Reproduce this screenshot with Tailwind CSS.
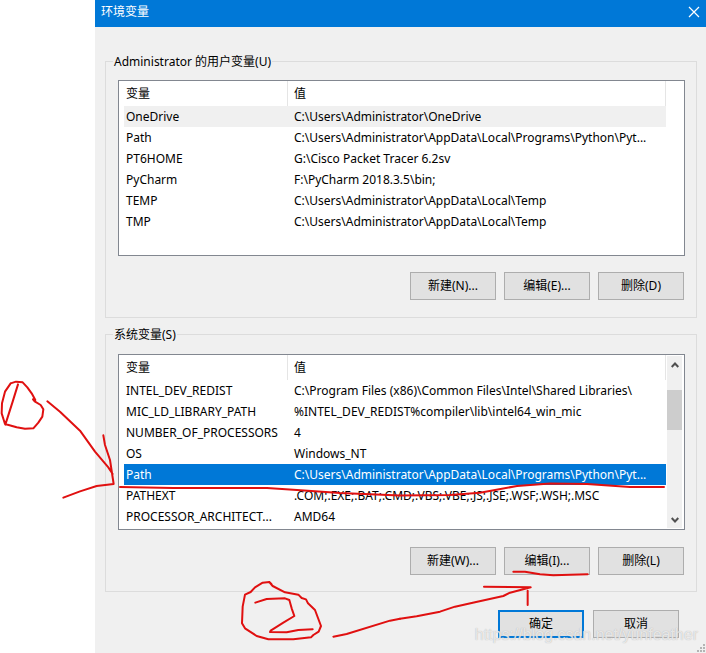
<!DOCTYPE html>
<html lang="zh-CN">
<head>
<meta charset="utf-8">
<title>环境变量</title>
<script src="https://cdn.jsdelivr.net/npm/@tailwindcss/browser@4"></script>
</head>
<body class="bg-white font-['Noto_Sans','Noto_Sans_CJK_SC',sans-serif] text-[12px] leading-4 text-black">
<div class="relative flex min-h-screen pl-[95px]">
  <main class="relative flex min-w-0 flex-1 flex-col bg-[#f0f0f0]">
    <header class="flex h-[27px] items-center justify-between bg-[#0078d7] pr-1.5 pl-1.5 text-white">
      <h1 class="pb-1">环境变量</h1>
      <button type="button" aria-label="关闭" class="pb-1">
        <svg class="size-3" viewBox="0 0 12 12" fill="none" stroke="currentColor" stroke-width="1.2"><path d="M1 1l10 10M11 1L1 11"/></svg>
      </button>
    </header>

    <div class="flex flex-col gap-2 pt-[26px] pr-[9px] pl-2.5">
      <fieldset class="min-w-0 border border-[#dcdcdc] pt-2.5 pr-[11px] pb-[17px] pl-3">
        <legend class="-ml-[5px] px-px leading-[17px]">Administrator 的用户变量(U)</legend>
        <div class="flex border border-[#828790] bg-white pb-[23px] pl-[5px]">
          <table class="min-w-0 flex-1 table-fixed border-collapse whitespace-nowrap text-left">
            <thead class="block">
              <tr class="flex h-[25px] items-center">
                <th class="h-full w-[164px] border-r border-[#e5e5e5] pt-[5px] pl-0.5 font-normal">变量</th>
                <th class="h-full flex-1 border-r border-[#e5e5e5] pt-[5px] pl-1.5 font-normal">值</th>
              </tr>
            </thead>
            <tbody class="block">
              <tr class="flex h-[21px] items-center bg-[#f0f0f0]"><td class="w-[164px] pl-0.5">OneDrive</td><td class="pl-1.5">C:\Users\Administrator\OneDrive</td></tr>
              <tr class="flex h-[21px] items-center"><td class="w-[164px] pl-0.5">Path</td><td class="pl-1.5">C:\Users\Administrator\AppData\Local\Programs\Python\Pyt...</td></tr>
              <tr class="flex h-[21px] items-center"><td class="w-[164px] pl-0.5">PT6HOME</td><td class="pl-1.5">G:\Cisco Packet Tracer 6.2sv</td></tr>
              <tr class="flex h-[21px] items-center"><td class="w-[164px] pl-0.5">PyCharm</td><td class="pl-1.5">F:\PyCharm 2018.3.5\bin;</td></tr>
              <tr class="flex h-[21px] items-center"><td class="w-[164px] pl-0.5">TEMP</td><td class="pl-1.5">C:\Users\Administrator\AppData\Local\Temp</td></tr>
              <tr class="flex h-[21px] items-center"><td class="w-[164px] pl-0.5">TMP</td><td class="pl-1.5">C:\Users\Administrator\AppData\Local\Temp</td></tr>
            </tbody>
          </table>
          <div class="w-[18px]"></div>
        </div>
        <div class="mt-4 flex justify-end gap-2 pr-px">
          <button type="button" class="h-7 w-[86px] border border-[#adadad] bg-[#e1e1e1]">新建(N)...</button>
          <button type="button" class="h-7 w-[86px] border border-[#adadad] bg-[#e1e1e1]">编辑(E)...</button>
          <button type="button" class="h-7 w-[86px] border border-[#adadad] bg-[#e1e1e1]">删除(D)</button>
        </div>
      </fieldset>

      <fieldset class="min-w-0 border border-[#dcdcdc] pt-[11px] pr-[11px] pb-4 pl-3">
        <legend class="-ml-[5px] px-px leading-[17px]">系统变量(S)</legend>
        <div class="flex border border-[#828790] bg-white pl-[5px]">
          <table class="mb-0.5 min-w-0 flex-1 table-fixed border-collapse whitespace-nowrap text-left">
            <thead class="block">
              <tr class="flex h-[25px] items-center">
                <th class="h-full w-[164px] border-r border-[#e5e5e5] pt-[5px] pl-0.5 font-normal">变量</th>
                <th class="h-full flex-1 border-r border-[#e5e5e5] pt-[5px] pl-1.5 font-normal">值</th>
              </tr>
            </thead>
            <tbody class="block">
              <tr class="flex h-[21px] items-center"><td class="w-[164px] pl-0.5">INTEL_DEV_REDIST</td><td class="pl-1.5">C:\Program Files (x86)\Common Files\Intel\Shared Libraries\</td></tr>
              <tr class="flex h-[21px] items-center"><td class="w-[164px] pl-0.5">MIC_LD_LIBRARY_PATH</td><td class="pl-1.5">%INTEL_DEV_REDIST%compiler\lib\intel64_win_mic</td></tr>
              <tr class="flex h-[21px] items-center"><td class="w-[164px] pl-0.5">NUMBER_OF_PROCESSORS</td><td class="pl-1.5">4</td></tr>
              <tr class="flex h-[21px] items-center"><td class="w-[164px] pl-0.5">OS</td><td class="pl-1.5">Windows_NT</td></tr>
              <tr class="flex h-[21px] items-center bg-[#0078d7] text-white"><td class="w-[164px] pl-0.5">Path</td><td class="pl-1.5">C:\Users\Administrator\AppData\Local\Programs\Python\Pyt...</td></tr>
              <tr class="flex h-[21px] items-center"><td class="w-[164px] pl-0.5">PATHEXT</td><td class="pl-1.5">.COM;.EXE;.BAT;.CMD;.VBS;.VBE;.JS;.JSE;.WSF;.WSH;.MSC</td></tr>
              <tr class="flex h-[21px] items-center"><td class="w-[164px] pl-0.5">PROCESSOR_ARCHITECT...</td><td class="pl-1.5">AMD64</td></tr>
            </tbody>
          </table>
          <div class="my-px mr-0.5 ml-px flex w-[15px] flex-col items-center bg-[#f0f0f0]">
            <button type="button" aria-label="向上滚动" class="flex h-[17px] w-full items-center justify-center">
              <svg class="size-2" viewBox="0 0 8 8" fill="none" stroke="#505050" stroke-width="2"><path d="M.7 6L4 2.5 7.3 6"/></svg>
            </button>
            <div class="mt-[17px] h-10 w-full bg-[#cdcdcd]"></div>
            <button type="button" aria-label="向下滚动" class="mt-auto flex h-[17px] w-full items-center justify-center">
              <svg class="size-2" viewBox="0 0 8 8" fill="none" stroke="#505050" stroke-width="2"><path d="M.7 2L4 5.5 7.3 2"/></svg>
            </button>
          </div>
        </div>
        <div class="mt-[17px] flex justify-end gap-2 pr-px">
          <button type="button" class="h-7 w-[86px] border border-[#adadad] bg-[#e1e1e1]">新建(W)...</button>
          <button type="button" class="h-7 w-[86px] border border-[#adadad] bg-[#e1e1e1]">编辑(I)...</button>
          <button type="button" class="h-7 w-[86px] border border-[#adadad] bg-[#e1e1e1]">删除(L)</button>
        </div>
      </fieldset>
    </div>

    <footer class="mt-[18px] flex justify-end gap-[9px] pr-[27px]">
      <button type="button" class="h-7 w-[86px] border-2 border-[#0078d7] bg-[#e1e1e1]">确定</button>
      <button type="button" class="h-7 w-[86px] border border-[#adadad] bg-[#e1e1e1]">取消</button>
    </footer>

    <!-- Resize grip -->
    <svg class="absolute right-0 bottom-0 size-[9px]" viewBox="0 0 9 9" fill="#b4b4b4"><path d="M6 0h2v2H6zM3 3h2v2H3zM6 3h2v2H6zM0 6h2v2H0zM3 6h2v2H3zM6 6h2v2H6z"/></svg>
    <p class="pointer-events-none absolute right-2 bottom-2 font-['Liberation_Sans',sans-serif] text-[16px] leading-5 text-white/70 [text-shadow:0_0_1px_#a8a8a8]">https://blog.csdn.net/yunfeather</p>
  </main>

  <!-- Hand-drawn annotations -->
  <svg class="pointer-events-none absolute top-0 left-0 h-[653px] w-[706px]" viewBox="0 0 706 653" fill="none" stroke="#e01010" stroke-width="2" stroke-linecap="round" stroke-linejoin="round" aria-hidden="true">
    <g transform="translate(0 370) scale(.33333)" stroke-width="6">
      <path d="M32 40L48 35L68 37L82 52L95 70L106 90L99 88L104 94L122 105L130 118L127 140L115 158L100 175L75 176L50 172L15 162L5 130L6 100L15 65L32 40M54 43L38 95L16 164"/>
      <path d="M142 94L180 125L240 182L285 245L325 292L338 312M310 196L315 225L330 270L341 342L290 348L240 364L190 383"/>
    </g>
    <path d="M120 487L173 488L267 488L297 490L340 493L400 495.5L450 495L480 492.7L517 486L550 483.5L587 484L630 487L664 487"/>
    <g transform="translate(230 560) scale(.33333)" stroke-width="6">
      <path d="M118 66L128 78L165 97L205 104L215 114L228 118L234 130L255 150L273 198L266 215L250 225L243 232L190 238L115 238L80 228L45 205L36 190L38 140L45 104L62 96L75 82L98 68L118 66L124 72"/>
      <path d="M76 128L110 117L165 115L178 120L185 145L193 168L160 188L122 212L120 216L170 217L205 210L248 208"/>
      <path d="M310 230L350 222L480 182L510 176"/>
    </g>
    <g transform="translate(400 530) scale(.33333)" stroke-width="6">
      <path d="M0 266L50 259L120 245L165 230L225 217L310 198L330 188L392 172L252 170M383 182V225"/>
      <path d="M340 125L375 125L420 133L460 136L563 133"/>
    </g>
  </svg>
</div>
</body>
</html>
